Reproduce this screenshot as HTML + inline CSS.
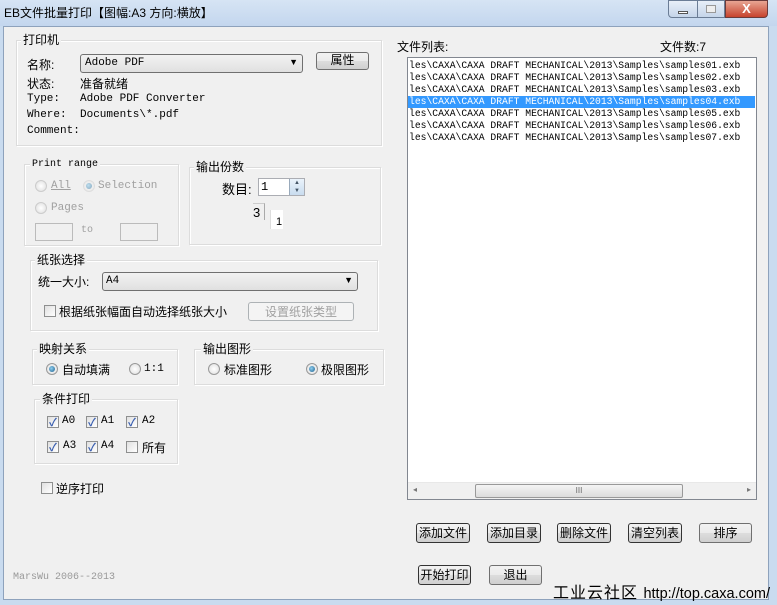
<!DOCTYPE html><html><head><meta charset="utf-8"><style>
*{box-sizing:border-box}
body{margin:0;width:777px;height:605px;overflow:hidden;background:#c9dbef;font-family:"Liberation Sans","Noto Sans CJK SC",sans-serif;font-size:12px;color:#000;position:relative}
.a{position:absolute;white-space:nowrap}
.m{font-family:"Liberation Mono","Noto Sans CJK SC",monospace;font-size:11px}
.g{position:absolute;border:1px solid #dcdcdc;box-shadow:inset 1px 1px 0 #fff,1px 1px 0 #fff}
.gt{position:absolute;background:#f0f0f0;padding:0 2px;top:-9px;left:6px;font-size:12px;line-height:16px}
.btn{position:absolute;border:1px solid #707070;border-radius:3px;background:linear-gradient(#f2f2f2,#ebebeb 50%,#dddddd 51%,#cfcfcf);text-align:center;font-size:12px;line-height:18px}
.cb{position:absolute;width:12px;height:12px;border:1px solid #8e8f8f;background:linear-gradient(135deg,#e0e0e0,#fff)}
.ck::after{content:"✓";position:absolute;left:1px;top:-3px;font-size:11px;color:#3a5fb0;font-weight:bold}
.rd{position:absolute;width:12px;height:12px;border-radius:50%;border:1px solid #999;background:radial-gradient(#fff,#ddd)}
.rs::after{content:"";position:absolute;left:2px;top:2px;width:6px;height:6px;border-radius:50%;background:radial-gradient(circle at 40% 40%,#8fd0f0,#1b5d8c)}
.dis{color:#a0a0a0}
</style></head><body>
<div style="position:absolute;left:0;top:0;width:777px;height:26px;background:linear-gradient(#d6e4f4,#c3d6ee)"></div>
<div class="a" style="left:4px;top:4px;font-size:12px">EB文件批量打印【图幅:A3 方向:横放】</div>
<div class="a" style="left:668px;top:0;width:30px;height:18px;border:1px solid #6b7d96;border-radius:0 0 0 4px;background:linear-gradient(#e8eff8,#c5d5ea)"><div style="position:absolute;left:9px;top:10px;width:10px;height:3px;background:#fff;border:1px solid #555"></div></div>
<div class="a" style="left:697px;top:0;width:28px;height:18px;border:1px solid #6b7d96;background:linear-gradient(#e8eff8,#c5d5ea)"><div style="position:absolute;left:8px;top:4px;width:10px;height:8px;border:1px solid #999;background:#eee"></div></div>
<div class="a" style="left:725px;top:0;width:43px;height:18px;border:1px solid #6b3b3b;border-radius:0 0 4px 0;background:linear-gradient(#e8a593,#c7432d);color:#fff;font-weight:bold;text-align:center;line-height:16px;font-size:13px">X</div>
<div style="position:absolute;left:3px;top:26px;width:766px;height:574px;background:#f0f0f0;border:1px solid #8ea2bc"></div>

<div class="g" style="left:16px;top:40px;width:366px;height:106px"><div class="gt" style="left:4px">打印机</div></div>
<div class="a" style="left:27px;top:56px">名称:</div>
<div class="a" style="left:80px;top:54px;width:223px;height:19px;border:1px solid #707070;border-radius:3px;background:linear-gradient(#f2f2f2,#e0e0e0)"><span class="a m" style="left:4px;top:2px">Adobe PDF</span><span class="a" style="right:4px;top:2px;font-size:9px">▼</span></div>
<div class="btn" style="left:316px;top:52px;width:53px;height:18px;line-height:15px">属性</div>
<div class="a" style="left:27px;top:75px">状态:</div><div class="a" style="left:80px;top:75px">准备就绪</div>
<div class="a m" style="left:27px;top:93px">Type:</div><div class="a m" style="left:80px;top:93px">Adobe PDF Converter</div>
<div class="a m" style="left:27px;top:109px">Where:</div><div class="a m" style="left:80px;top:109px">Documents\*.pdf</div>
<div class="a m" style="left:27px;top:125px">Comment:</div>

<div class="g" style="left:24px;top:164px;width:155px;height:82px"><div class="gt m" style="left:5px;top:-8px;font-size:10px">Print range</div></div>
<div class="rd" style="left:35px;top:180px;border-color:#ccc"></div><div class="a m dis" style="left:51px;top:180px;text-decoration:underline">All</div>
<div class="rd rs" style="left:83px;top:180px;border-color:#ccc;opacity:.5"></div><div class="a m dis" style="left:98px;top:180px">Selection</div>
<div class="rd" style="left:35px;top:202px;border-color:#ccc"></div><div class="a m dis" style="left:51px;top:202px">Pages</div>
<div class="a" style="left:35px;top:223px;width:38px;height:18px;border:1px solid #bbb"></div>
<div class="a m dis" style="left:81px;top:225px;font-size:10px">to</div>
<div class="a" style="left:120px;top:223px;width:38px;height:18px;border:1px solid #bbb"></div>

<div class="g" style="left:189px;top:167px;width:192px;height:78px"><div class="gt" style="left:4px">输出份数</div></div>
<div class="a" style="left:222px;top:179px;font-size:13px">数目:</div>
<div class="a" style="left:258px;top:178px;width:47px;height:18px;border:1px solid #abadb3;background:#fff"><span class="a m" style="left:2px;top:1px;font-size:12px">1</span><div class="a" style="right:0;top:0;width:15px;height:16px;background:linear-gradient(#eaf3fb,#c9dcef);border-left:1px solid #9ab;font-size:6px;text-align:center;line-height:8px;color:#456">▲<br>▼</div></div>
<div class="a" style="left:253px;top:203px;width:12px;height:17px;border-right:1px solid #aaa;border-top:1px solid #ccc;font-size:13px;line-height:17px">3</div>
<div class="a" style="left:270px;top:210px;width:13px;height:19px;border-left:1px solid #ddd;background:#fff;font-size:11px;line-height:24px;padding-left:5px">1</div>

<div class="g" style="left:30px;top:260px;width:348px;height:71px"><div class="gt" style="left:4px">纸张选择</div></div>
<div class="a" style="left:38px;top:273px">统一大小:</div>
<div class="a" style="left:102px;top:272px;width:256px;height:19px;border:1px solid #707070;border-radius:3px;background:linear-gradient(#f2f2f2,#e0e0e0)"><span class="a m" style="left:3px;top:2px">A4</span><span class="a" style="right:4px;top:2px;font-size:9px">▼</span></div>
<div class="cb" style="left:44px;top:305px"></div><div class="a" style="left:59px;top:303px">根据纸张幅面自动选择纸张大小</div>
<div class="btn dis" style="left:248px;top:302px;width:106px;height:19px;border-color:#adb2b5;background:#f4f4f4">设置纸张类型</div>

<div class="g" style="left:32px;top:349px;width:146px;height:36px"><div class="gt" style="left:4px">映射关系</div></div>
<div class="rd rs" style="left:46px;top:363px"></div><div class="a" style="left:62px;top:361px">自动填满</div>
<div class="rd" style="left:129px;top:363px"></div><div class="a m" style="left:144px;top:363px">1:1</div>
<div class="g" style="left:194px;top:349px;width:190px;height:36px"><div class="gt" style="left:6px">输出图形</div></div>
<div class="rd" style="left:208px;top:363px"></div><div class="a" style="left:224px;top:361px">标准图形</div>
<div class="rd rs" style="left:306px;top:363px"></div><div class="a" style="left:321px;top:361px">极限图形</div>

<div class="g" style="left:34px;top:399px;width:144px;height:65px"><div class="gt" style="left:5px">条件打印</div></div>
<div class="cb ck" style="left:47px;top:416px"></div><div class="a m" style="left:62px;top:415px">A0</div>
<div class="cb ck" style="left:86px;top:416px"></div><div class="a m" style="left:101px;top:415px">A1</div>
<div class="cb ck" style="left:126px;top:416px"></div><div class="a m" style="left:142px;top:415px">A2</div>
<div class="cb ck" style="left:47px;top:441px"></div><div class="a m" style="left:63px;top:440px">A3</div>
<div class="cb ck" style="left:86px;top:441px"></div><div class="a m" style="left:101px;top:440px">A4</div>
<div class="cb" style="left:126px;top:441px"></div><div class="a" style="left:142px;top:439px">所有</div>
<div class="cb" style="left:41px;top:482px"></div><div class="a" style="left:56px;top:480px">逆序打印</div>
<div class="a m" style="left:13px;top:572px;color:#999;font-size:10px">MarsWu 2006--2013</div>

<div class="a" style="left:397px;top:38px">文件列表:</div>
<div class="a" style="left:660px;top:38px">文件数:7</div>
<div class="a" style="left:407px;top:57px;width:350px;height:443px;border:1px solid #828790;background:#fff;overflow:hidden">
<div class="m" style="position:absolute;left:0;top:2px;line-height:12px;font-size:9.7px">
<div style="padding-left:1px">les\CAXA\CAXA DRAFT MECHANICAL\2013\Samples\samples01.exb</div>
<div style="padding-left:1px">les\CAXA\CAXA DRAFT MECHANICAL\2013\Samples\samples02.exb</div>
<div style="padding-left:1px">les\CAXA\CAXA DRAFT MECHANICAL\2013\Samples\samples03.exb</div>
<div style="padding-left:1px;background:#3399ff;color:#fff;width:347px">les\CAXA\CAXA DRAFT MECHANICAL\2013\Samples\samples04.exb</div>
<div style="padding-left:1px">les\CAXA\CAXA DRAFT MECHANICAL\2013\Samples\samples05.exb</div>
<div style="padding-left:1px">les\CAXA\CAXA DRAFT MECHANICAL\2013\Samples\samples06.exb</div>
<div style="padding-left:1px">les\CAXA\CAXA DRAFT MECHANICAL\2013\Samples\samples07.exb</div>
</div>
<div class="a" style="left:0;bottom:0;width:348px;height:17px;background:#f0f0f0;border-top:1px solid #e8e8e8">
<span class="a" style="left:5px;top:2px;font-size:8px;color:#777">◂</span>
<div class="a" style="left:67px;top:1px;width:208px;height:14px;border:1px solid #999;border-radius:2px;background:linear-gradient(#f4f4f4,#dcdcdc);text-align:center;font-size:8px;line-height:12px;color:#666">III</div>
<span class="a" style="right:5px;top:2px;font-size:8px;color:#777">▸</span></div>
</div>
<div class="btn" style="left:416px;top:523px;width:54px;height:20px;border-color:#333">添加文件</div>
<div class="btn" style="left:487px;top:523px;width:54px;height:20px;border-color:#333">添加目录</div>
<div class="btn" style="left:557px;top:523px;width:54px;height:20px;border-color:#333">删除文件</div>
<div class="btn" style="left:628px;top:523px;width:54px;height:20px;border-color:#333">清空列表</div>
<div class="btn" style="left:699px;top:523px;width:53px;height:20px">排序</div>
<div class="btn" style="left:418px;top:565px;width:53px;height:20px;border-color:#333">开始打印</div>
<div class="btn" style="left:489px;top:565px;width:53px;height:20px">退出</div>
<div class="a" style="left:553px;top:579px;font-size:16px;letter-spacing:1px">工业云社区 <span style="font-size:14.5px;letter-spacing:0">http://top.caxa.com/</span></div>
</body></html>
